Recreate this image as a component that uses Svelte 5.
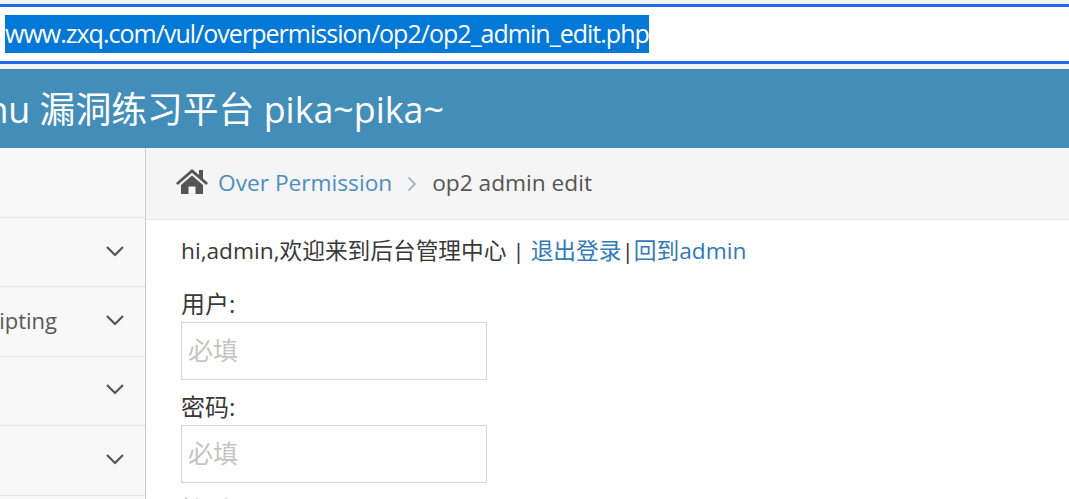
<script lang="ts">
	const menu = [
		{ label: '' },
		{ label: 'Cross-Site Scripting' },
		{ label: '' },
		{ label: '' }
	];
	const fields = ['用户:', '密码:'];
</script>

<div class="page">
	<div class="urlbar">
		<div class="url-inner">
			<span class="url-text">www.zxq.com/vul/overpermission/op2/op2_admin_edit.php</span>
		</div>
	</div>

	<header class="navbar">
		<span class="brand">Pikachu 漏洞练习平台 pika~pika~</span>
	</header>

	<div class="layout">
		<aside class="sidebar">
			<div class="shortcuts"></div>
			{#each menu as item}
				<div class="menu-item">
					<span class="menu-label">{item.label}</span>
					<svg class="arrow" width="20" height="12" viewBox="0 0 20 12" aria-hidden="true">
						<path d="M2 2 L10 10 L18 2" fill="none" stroke="#555" stroke-width="2.2" />
					</svg>
				</div>
			{/each}
		</aside>

		<main class="content">
			<div class="breadcrumbs">
				<svg class="home" width="32" height="26" viewBox="0 0 32 26" aria-hidden="true">
					<path
						fill="#555"
						d="M16 1 L23 7 V2 H27 V10.5 L32 15 L30.3 17 L16 4.8 L1.7 17 L0 15 Z M16 7.5 L27 17 V26 H19.5 V18.5 H12.5 V26 H5 V17 Z"
					/>
				</svg>
				<a class="crumb-link" href="#top">Over Permission</a>
				<svg class="sep" width="10" height="16" viewBox="0 0 10 16" aria-hidden="true">
					<path d="M1.5 1.5 L8 8 L1.5 14.5" fill="none" stroke="#b2b6bf" stroke-width="2" />
				</svg>
				<span class="crumb-current">op2 admin edit</span>
			</div>

			<div class="inner">
				<p class="welcome">
					hi,admin,欢迎来到后台管理中心 | <a href="#top">退出登录</a>|<a href="#top">回到admin</a>
				</p>
				<form>
					{#each fields as label}
						<label class="field">
							<span class="field-label">{label}</span>
							<input type="text" placeholder="必填" />
						</label>
					{/each}
					<span class="field-label">性别:</span>
				</form>
			</div>
		</main>
	</div>
</div>

<style>
	:global(body) {
		margin: 0;
		background: #fff;
		overflow: hidden;
	}

	.page {
		width: 1069px;
		height: 499px;
		overflow: hidden;
		font-family: 'Open Sans', 'Noto Sans CJK SC', sans-serif;
		color: #393939;
	}

	.urlbar {
		box-sizing: border-box;
		height: 69px;
		padding-top: 4px;
		background: #f3f3f3;
	}

	.url-inner {
		box-sizing: border-box;
		height: 60px;
		background: #fff;
		border-top: 3px solid #2368f0;
		border-bottom: 3px solid #2368f0;
		padding: 8px 0 0 5px;
	}

	.url-text {
		display: inline-block;
		height: 38px;
		line-height: 37px;
		background: #0378d7;
		color: #fff;
		font-size: 25px;
		letter-spacing: -0.98px;
		white-space: nowrap;
	}

	.navbar {
		height: 79px;
		background: #438eb9;
		color: #fff;
		display: flex;
		align-items: center;
		overflow: hidden;
	}

	.brand {
		margin-top: -3px;
		margin-left: -100px;
		font-size: 35.8px;
		white-space: nowrap;
	}

	.layout {
		display: flex;
		height: 351px;
	}

	.sidebar {
		box-sizing: border-box;
		width: 146px;
		flex: none;
		background: #f8f8f8;
		border-right: 1px solid #ccc;
		overflow: hidden;
	}

	.shortcuts {
		height: 69px;
		border-bottom: 1px solid #e5e5e5;
	}

	.menu-item {
		box-sizing: border-box;
		height: 69.4px;
		padding-bottom: 3px;
		border-bottom: 1px solid #e5e5e5;
		display: flex;
		align-items: center;
		justify-content: flex-end;
		position: relative;
		padding-right: 20px;
		color: #585858;
		font-size: 22px;
	}

	.menu-label {
		position: absolute;
		right: 88px;
		white-space: nowrap;
	}

	.content {
		flex: 1;
		min-width: 0;
	}

	.breadcrumbs {
		box-sizing: border-box;
		height: 72px;
		padding-bottom: 3px;
		background: #f5f5f5;
		border-bottom: 1px solid #e5e5e5;
		display: flex;
		align-items: center;
		padding-left: 30px;
		font-size: 22.7px;
	}

	.home {
		margin-right: 10px;
		margin-top: -2px;
	}

	.crumb-link {
		color: #4c8fbd;
		text-decoration: none;
	}

	.sep {
		margin: 4px 15px 0 15px;
	}

	.crumb-current {
		color: #555;
	}

	.inner {
		padding: 14px 0 0 35px;
		font-size: 22.7px;
		line-height: 34px;
	}

	.welcome {
		margin: 0 0 18px;
		color: #393939;
		white-space: nowrap;
	}

	.welcome a {
		color: #337ab7;
		text-decoration: none;
	}

	.field {
		display: block;
		margin-bottom: 9px;
	}

	.field-label {
		display: block;
		height: 36px;
		line-height: 35px;
		font-size: 24px;
	}

	input {
		display: block;
		box-sizing: border-box;
		width: 306px;
		height: 58px;
		padding: 0 6px 3px;
		border: 1px solid #d5d5d5;
		background: #fff;
		font-family: 'Open Sans', 'Noto Sans CJK SC', sans-serif;
		font-size: 25px;
	}

	input::placeholder {
		color: #c4c4c4;
		opacity: 1;
	}
</style>
